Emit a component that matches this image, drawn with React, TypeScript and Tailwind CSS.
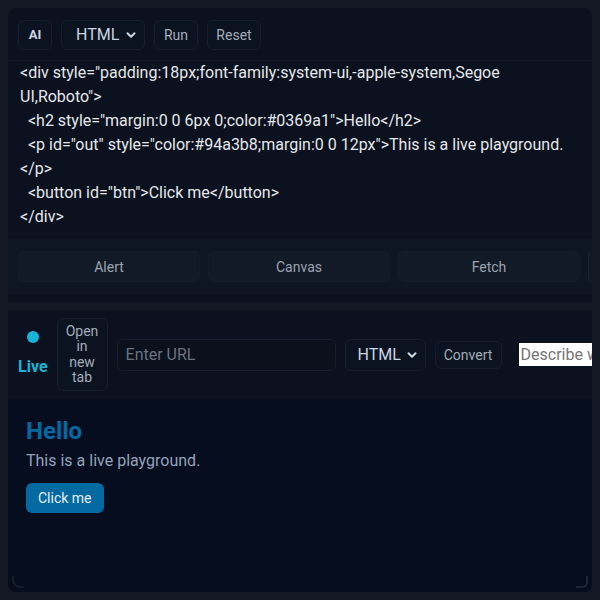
import React from "react";

const code = `<div style="padding:18px;font-family:system-ui,-apple-system,Segoe UI,Roboto">
  <h2 style="margin:0 0 6px 0;color:#0369a1">Hello</h2>
  <p id="out" style="color:#94a3b8;margin:0 0 12px">This is a live playground.</p>
  <button id="btn">Click me</button>
</div>`;

const Chevron = () => (
  <svg className="h-3.5 w-3.5" viewBox="0 0 24 24" fill="none" stroke="currentColor" strokeWidth={3.5} strokeLinecap="round" strokeLinejoin="round">
    <path d="M6 9l6 6 6-6" />
  </svg>
);

const snippets = ["Alert", "Canvas", "Fetch"];

export default function App() {
  return (
    <div className="h-[600px] w-[600px] overflow-hidden bg-[#121824] p-2 font-['Roboto',sans-serif] flex flex-col gap-2">
      {/* editor */}
      <div className="flex flex-col rounded-t-lg bg-[#0b111e] pb-2">
        <div className="flex items-center gap-[9px] px-2.5 pt-3 pb-2.5 border-b border-[#0f1624]">
          <button className="h-[30px] w-[34px] rounded-md border border-[#161e2c] bg-[#0c1320] text-[13px] font-bold text-[#cbd5e1]">AI</button>
          <div className="flex h-[30px] w-[84px] items-center justify-between rounded-md border border-[#161e2c] bg-[#0c1320] pl-3.5 pr-1.5 text-base text-[#cbd5e1]">
            <span>HTML</span>
            <Chevron />
          </div>
          <button className="h-[30px] w-[44px] rounded-md border border-[#161e2c] bg-[#0c1320] text-sm text-[#a3acb9]">Run</button>
          <button className="h-[30px] w-[54px] rounded-md border border-[#161e2c] bg-[#0c1320] text-sm text-[#a3acb9]">Reset</button>
        </div>
        <pre className="h-[178px] whitespace-pre-wrap break-words pl-3 pr-4 pt-0 font-['Roboto',sans-serif] text-base leading-6 text-[#e5e7eb]">
          {code}
        </pre>
        <div className="flex gap-2 overflow-hidden bg-[#0f1623] px-2.5 py-3">
          {snippets.map((s) => (
            <button
              key={s}
              className="h-[31px] w-[182px] shrink-0 rounded-md border border-[#151d2b] bg-[#121a28] text-sm text-[#9ca3af]"
            >
              {s}
            </button>
          ))}
          <span className="h-[31px] w-[3px] shrink-0 rounded-l-md border-l border-[#1a2332] bg-[#121a28]" />
        </div>
      </div>

      {/* preview */}
      <div className="flex flex-1 flex-col overflow-hidden rounded-b-lg bg-[#0b111e]">
        <div className="flex items-center gap-[9px] px-2.5 py-2">
          <div className="flex w-[30px] flex-col items-center gap-3">
            <span className="h-3 w-3 rounded-full bg-[#17b4d8]" />
            <span className="text-base font-bold text-[#17b4d8]">Live</span>
          </div>
          <button className="h-[73px] w-[51px] shrink-0 rounded-md border border-[#161e2c] bg-[#0c1320] px-2 text-sm leading-[15.5px] text-[#a3acb9]">
            Open in new tab
          </button>
          <input
            placeholder="Enter URL"
            className="h-8 w-[219px] shrink-0 rounded-md border border-[#161e2c] bg-[#0a101c] px-2 text-base text-[#cbd5e1] placeholder:text-[#6b7280] outline-none"
          />
          <div className="flex h-8 w-[81px] shrink-0 items-center justify-between rounded-md border border-[#161e2c] bg-[#0c1320] pl-3 pr-1.5 text-base text-[#cbd5e1]">
            <span>HTML</span>
            <Chevron />
          </div>
          <button className="h-7 w-[67px] shrink-0 rounded-md border border-[#161e2c] bg-[#0c1320] text-sm text-[#a3acb9]">Convert</button>
          <input
            placeholder="Describe what to build"
            className="ml-2 h-[23px] w-[200px] shrink-0 bg-white px-0.5 text-base text-black placeholder:text-[#757575] outline-none"
          />
        </div>
        <div className="relative flex-1 bg-[#050d1f] p-[18px]">
          <h2 className="mb-1.5 text-2xl font-bold leading-7 text-[#0369a1]">Hello</h2>
          <p className="mb-3 text-base leading-5 text-[#94a3b8]">This is a live playground.</p>
          <button className="h-[30px] rounded-md bg-[#0369a1] px-3 text-sm text-[#e6f0f7]">Click me</button>
          <span className="absolute bottom-1 right-1 h-3 w-3 border-r-2 border-b-2 rounded-br-md border-[#1e2636]" />
          <span className="absolute bottom-1 left-1 h-3 w-3 border-l-2 border-b-2 rounded-bl-lg border-[#141c2a]" />
        </div>
      </div>
    </div>
  );
}
